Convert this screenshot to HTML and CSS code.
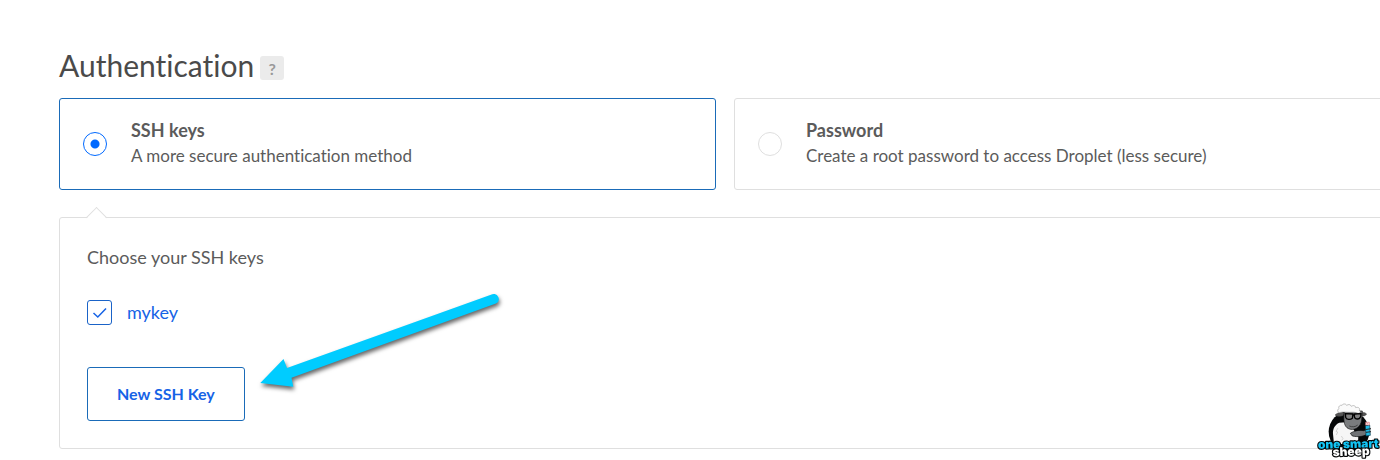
FILE: index.html
```html
<!DOCTYPE html>
<html lang="en">
<head>
    <meta charset="UTF-8">
    <meta name="viewport" content="width=device-width, initial-scale=1.0">
    <title>Authentication</title>
    <link rel="stylesheet" href="styles.css">
</head>
<body>
    <main class="auth">
        <div class="heading">
            <h1>Authentication</h1>
            <button type="button" class="help" aria-label="Help">?</button>
        </div>

        <div class="methods">
            <label class="method">
                <input type="radio" name="method" value="ssh" checked>
                <span class="method-text">
                    <strong>SSH keys</strong>
                    <span>A more secure authentication method</span>
                </span>
            </label>
            <label class="method">
                <input type="radio" name="method" value="password">
                <span class="method-text">
                    <strong>Password</strong>
                    <span>Create a root password to access Droplet (less secure)</span>
                </span>
            </label>
        </div>

        <section class="panel">
            <p class="panel-title">Choose your SSH keys</p>
            <label class="key">
                <span class="key-box">
                    <input type="checkbox" checked>
                    <svg viewBox="0 0 25 25"><path d="M6.500 13l4.300 4 8.200-8.500"/></svg>
                </span>
                <span>mykey</span>
            </label>
            <button type="button" class="new-key">New SSH Key</button>

            <svg class="arrow" viewBox="0 0 260 120">
                <path d="M242.300 14.300a5 5 0 0 1 3.600 9.300L41.500 97.700l1.800 9L10.300 103 33.500 79l3.500 9z"/>
            </svg>
        </section>
    </main>

    <svg class="logo" viewBox="0 0 210 186" role="img" aria-label="one smart sheep">
        <circle cx="117" cy="101" r="61" fill="#050708"/>
        <!-- body -->
        <path d="M88 74c-14 6-20 19-19 34l3 30h72l1-26c-9-6-14-15-17-25l-22-14z" fill="#f6f6f6"/>
        <path d="M84 90l-6 10 5 2-4 9M94 114l5 8-4 5" fill="none" stroke="#c4c4c4" stroke-width="2"/>
        <!-- head and ears -->
        <path d="M104 43c-13-2-24 2-29 8 7 6 17 5 25 2z" fill="#555" stroke="#222" stroke-width="1"/>
        <path d="M152 45c8-3 15-1 18 3-4 7-12 8-19 4z" fill="#555" stroke="#222" stroke-width="1"/>
        <path d="M103 39c-2 20-3 36 5 47 7 9 22 11 33 4 9-6 13-15 14-24l2-27z" fill="#7a7c7e" stroke="#111" stroke-width="2"/>
        <path d="M118 84c9 4 18 3 25-3" fill="none" stroke="#222" stroke-width="2"/>
        <!-- wool -->
        <path d="M88 44c-7-3-6-10-1-12-3-6 3-12 9-10 3-6 12-5 14 0 5-4 12-3 14 3 7-5 13-1 13 4 8-3 14 2 11 8 5 3 3 9-3 9-9-4-18-4-27-3-11 0-19-3-30 1z" fill="#fafafa" stroke="#555" stroke-width="1"/>
        <!-- glasses -->
        <path d="M106 47l23 1-2 13c-6 5-18 4-20-3zM134 48l19-1c0 10-3 15-10 16-8 0-10-4-10-10z" fill="#808080" stroke="#000" stroke-width="4"/>
        <path d="M128 51h6" stroke="#000" stroke-width="4"/>
        <!-- arms and cup -->
        <path d="M121 106c14-9 26-10 40-8l12-5 7 7-9 9c-14 8-28 8-44 5z" fill="#707376" stroke="#050708" stroke-width="2"/>
        <path d="M166 83l13-2 2 31-13 2z" fill="#20bce8" stroke="#07384a" stroke-width="2"/>
        <path d="M165 95l18-3M168 103l15-2" stroke="#222" stroke-width="3"/>
        <path d="M167 73h11v8h-11z" fill="#fff" stroke="#e0686e" stroke-width="2"/>
        <path d="M170 77h5" stroke="#dc4c54" stroke-width="2"/>
        <g class="logo-text">
            <text x="24" y="152" fill="#12c4f4" transform="rotate(-1 24 152)">one smart</text>
            <text x="68" y="175" fill="#fff" transform="rotate(-2 68 175)">sheep</text>
        </g>
    </svg>
</body>
</html>
```

FILE: styles.css
```css
* {
    box-sizing: border-box;
}

body {
    margin: 0;
    background: #fff;
    color: #5b5b5b;
    font-family: Lato, "Liberation Sans", sans-serif;
    font-size: 17px;
    font-variant-ligatures: none;
    line-height: 25px;
    overflow-x: hidden;
}

/* the form runs a little past the right edge of the window */
.auth {
    margin: 0 -11px 0 59px;
    padding: 45px 0 12px;
}

.heading {
    display: flex;
    align-items: center;
    gap: 6px;
    margin-bottom: 13px;
}

h1 {
    margin: 0;
    color: #4a4a4a;
    font-size: 30px;
    font-weight: 400;
    line-height: 40px;
}

.help {
    width: 24px;
    height: 24px;
    margin-top: 6px;
    padding: 0;
    border: 0;
    border-radius: 3px;
    background: #ebebeb;
    color: #999;
    font-family: inherit;
    font-size: 16px;
    font-weight: 700;
}

.methods {
    display: grid;
    grid-template-columns: 1fr 1fr;
    gap: 18px;
    margin-bottom: 27px;
}

.method {
    display: flex;
    align-items: center;
    gap: 24px;
    padding: 19px 23px;
    border: 1px solid #dfdfdf;
    border-radius: 3px;
    cursor: pointer;
}

.method:has(input:checked) {
    border-color: #1a6bb8;
}

.method input {
    appearance: none;
    flex: none;
    width: 24px;
    height: 24px;
    margin: 0;
    border: 1px solid #dfdfdf;
    border-radius: 50%;
}

.method input:checked {
    border-color: #0069ff;
    background: radial-gradient(circle, #0069ff 4px, transparent 5px);
}

.method-text {
    display: flex;
    flex-direction: column;
    padding-bottom: 2px;
}

.method-text strong {
    font-size: 18px;
}

.panel {
    position: relative;
    padding: 27px;
    border: 1px solid #dfdfdf;
    border-radius: 3px;
    font-size: 18px;
}

.panel::before {
    content: "";
    position: absolute;
    top: -8px;
    left: 29px;
    width: 14px;
    height: 14px;
    border: 1px solid #dfdfdf;
    border-width: 1px 0 0 1px;
    background: linear-gradient(135deg, #fff 55%, transparent 55%);
    transform: rotate(45deg);
}

.panel-title {
    margin: 0 0 30px;
}

.key {
    display: flex;
    align-items: center;
    gap: 15px;
    width: fit-content;
    margin-bottom: 42px;
    color: #1663e6;
    cursor: pointer;
}

.key-box {
    position: relative;
    width: 25px;
    height: 25px;
}

.key-box input {
    appearance: none;
    display: block;
    width: 25px;
    height: 25px;
    margin: 0;
    border: 1px solid #1a63c8;
    border-radius: 3px;
}

.key-box svg {
    position: absolute;
    inset: 0;
    fill: none;
    stroke: #1663e6;
    stroke-width: 1.5;
    visibility: hidden;
}

.key-box input:checked + svg {
    visibility: visible;
}

.new-key {
    display: block;
    padding: 14px 29px;
    border: 1px solid #1a6bb8;
    border-radius: 3px;
    background: #fff;
    color: #1663e6;
    font-family: inherit;
    font-size: 16px;
    font-weight: 700;
    line-height: 24px;
    cursor: pointer;
}

.arrow {
    position: absolute;
    top: 62px;
    left: 190px;
    width: 260px;
    height: 120px;
    fill: #00ccff;
    filter: drop-shadow(1px 3px 2px rgba(0, 0, 0, 0.6));
    pointer-events: none;
}

.logo {
    position: fixed;
    right: 0;
    bottom: 0;
    width: 70px;
    height: 62px;
}

.logo-text {
    font-family: Inter, "Liberation Sans", sans-serif;
    font-size: 36px;
    font-weight: 900;
    stroke: #050708;
    stroke-width: 7px;
    stroke-linejoin: round;
    paint-order: stroke;
}
```
